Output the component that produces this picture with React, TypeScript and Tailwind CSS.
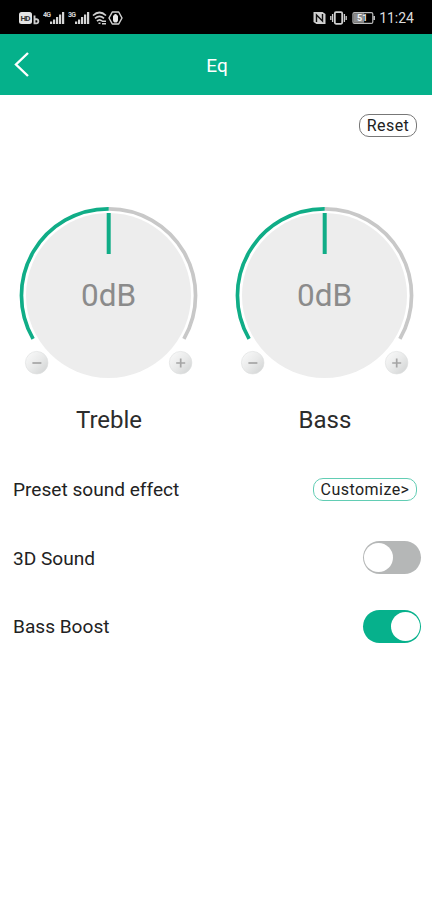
import { useState } from 'react';

interface DialProps {
  label: string;
  value: number;
  onChange: (value: number) => void;
}

function SignalIcon({ label }: { label: string }) {
  return (
    <svg width="22" height="16" viewBox="0 0 22 16" fill="#d4d4d4">
      <text x="0" y="6.5" fontSize="7" fontWeight="700" fontFamily="Roboto, sans-serif" textLength="8">
        {label}
      </text>
      <rect x="7" y="11.5" width="2.2" height="2.5" />
      <rect x="10" y="9.5" width="2.2" height="4.5" />
      <rect x="13" y="7" width="2.2" height="7" />
      <rect x="16" y="4.5" width="2.2" height="9.5" />
      <rect x="19" y="2" width="2.2" height="12" />
    </svg>
  );
}

function StatusBar() {
  return (
    <div className="flex h-[34px] items-center justify-between bg-black px-[18px] text-[#dcdcdc]">
      <div className="flex items-center pt-px">
        <svg width="22" height="16" viewBox="0 0 22 16">
          <rect x="1" y="2" width="13" height="12" rx="2.5" fill="#e4e4e4" />
          <text x="2.5" y="11" fontSize="8" fontWeight="700" fontFamily="Roboto, sans-serif" fill="#333" textLength="10">
            HD
          </text>
          <path d="M16.5 5.5v7.9h2a1.8 1.8 0 0 0 1.8-1.8v-.6a1.8 1.8 0 0 0-1.8-1.8h-2" fill="none" stroke="#ccc" strokeWidth="1.9" />
        </svg>
        <div className="ml-[3px]">
          <SignalIcon label="4G" />
        </div>
        <div className="ml-[3px]">
          <SignalIcon label="3G" />
        </div>
        <svg className="ml-[2px]" width="16" height="16" viewBox="0 0 16 16" fill="none" stroke="#d0d0d0" strokeWidth="1.7">
          <path d="M1 5.5Q7.5 -.5 14 5.5M3 8.3Q7.5 4.3 12 8.3M5 11.2Q7.5 8.6 10 11.2" />
          <path d="M6.5 13.2h2M10 11.3h4M10 13.8h4" strokeWidth="1.4" />
        </svg>
        <svg width="15" height="16" viewBox="0 0 15 16" fill="none" stroke="#cfcfcf" strokeWidth="1.5">
          <path d="M4.3 2h6.4L14 8l-3.3 6H4.3L1 8Z" strokeLinejoin="round" />
          <path d="M5 6.5q0-1.3 1-1.3 .3-1.2 1.5-1.2t1.5 1.2q1 0 1 1.3v3.2a2.5 2.8 0 0 1-5 0Z" fill="#e8e8e8" stroke="none" />
        </svg>
      </div>
      <div className="flex items-center pt-px">
        <svg className="mr-px" width="13" height="16" viewBox="0 0 13 16">
          <path d="M0.5 2h9l3 2v10h-9l-3-2Z" fill="#d0d0d0" />
          <path d="M3.5 12V5l6 6V4" fill="none" stroke="#111" strokeWidth="1.4" />
        </svg>
        <svg className="ml-[3px]" width="17" height="16" viewBox="0 0 17 16" fill="none" stroke="#d0d0d0" strokeWidth="1.8">
          <rect x="4.8" y="2.2" width="7.4" height="11.6" rx="1.2" />
          <path d="M2.6 4v8M14.4 4v8M.8 6v4M16.2 6v4" strokeWidth="1.3" />
        </svg>
        <svg className="ml-[5px]" width="24" height="16" viewBox="0 0 24 16">
          <rect x="1" y="2.6" width="19.8" height="10.8" rx="1.5" fill="none" stroke="#bdbdbd" strokeWidth="1.2" />
          <rect x="1.6" y="3.2" width="10.5" height="9.6" fill="#8c8c8c" />
          <rect x="21.3" y="6" width="1.7" height="4" fill="#bdbdbd" />
          <text x="5" y="11.2" fontSize="9" fontWeight="700" fontFamily="Roboto, sans-serif" fill="#f2f2f2">
            51
          </text>
        </svg>
        <span className="ml-[3px] text-[14px] leading-4">11:24</span>
      </div>
    </div>
  );
}

function Dial({ label, value, onChange }: DialProps) {
  const id = label.toLowerCase();

  return (
    <div className="flex w-1/2 flex-col items-center">
      <svg width="216" height="190" viewBox="0 0 216 190">
        <defs>
          <linearGradient id={`knob-${id}`} x1="0" y1="0" x2="1" y2="1">
            <stop offset="0" stopColor="#fbfbfb" />
            <stop offset="0.5" stopColor="#e9eaea" />
            <stop offset="1" stopColor="#cfd1d1" />
          </linearGradient>
        </defs>
        <circle cx="108.5" cy="100.5" r="82.5" fill="#ededed" />
        <path d="M108.5 13.8A86.7 86.7 0 0 1 183.9 143.9" fill="none" stroke="#c8c8c8" strokeWidth="3.7" />
        <path d="M33.1 143.9A86.7 86.7 0 0 1 108.7 13.8" fill="none" stroke="#10ad87" strokeWidth="3.7" />
        <rect x="106.7" y="18" width="4" height="41" fill="#10ad87" transform={`rotate(${value * 10} 108.5 100.5)`} />
        <text x="108.5" y="111.3" textAnchor="middle" fontSize="31.5" fill="#8b8b8b">
          {value}dB
        </text>
        <g className="cursor-pointer" onClick={() => onChange(Math.max(value - 1, -12))}>
          <circle cx="36.7" cy="167.7" r="11.3" fill={`url(#knob-${id})`} stroke="#dedfdf" strokeWidth="0.6" />
          <path d="M32.4 168h9" stroke="#a5a5a5" strokeWidth="1.7" />
        </g>
        <g className="cursor-pointer" onClick={() => onChange(Math.min(value + 1, 12))}>
          <circle cx="180.6" cy="167.7" r="11.3" fill={`url(#knob-${id})`} stroke="#dedfdf" strokeWidth="0.6" />
          <path d="M176.2 168h9M180.7 163.5v9" stroke="#a5a5a5" strokeWidth="1.7" />
        </g>
      </svg>
      <span className="mt-5 pl-[2px] text-[24px] leading-[30px] text-[#2c2c2c]">{label}</span>
    </div>
  );
}

function Toggle({ on, onClick }: { on: boolean; onClick: () => void }) {
  return (
    <button
      role="switch"
      aria-checked={on}
      className={`flex h-[33px] w-[58px] items-center rounded-full ${
        on ? 'justify-end bg-[#06b18c] pr-px' : 'justify-start bg-[#b5b7b7] pl-px'
      }`}
      onClick={onClick}
    >
      <span className="size-[29px] rounded-full bg-white" />
    </button>
  );
}

export default function App() {
  const [treble, setTreble] = useState(0);
  const [bass, setBass] = useState(0);
  const [sound3d, setSound3d] = useState(false);
  const [bassBoost, setBassBoost] = useState(true);

  const reset = () => {
    setTreble(0);
    setBass(0);
  };

  return (
    <div className="h-[900px] w-[432px] overflow-hidden bg-white font-[Roboto,sans-serif] text-[#222]">
      <StatusBar />
      <header className="grid h-[60.5px] grid-cols-3 items-center bg-[#05b18b] text-white">
        <button aria-label="Back" className="pl-[14px]">
          <svg width="16" height="26" viewBox="0 0 16 26" fill="none" stroke="white" strokeWidth="2.4">
            <path d="M14 2L2 13.5L14 25" />
          </svg>
        </button>
        <h1 className="pt-1 pl-[2px] text-center text-[19px]">Eq</h1>
      </header>

      <div className="flex justify-end pt-[19.5px] pr-[15px]">
        <button
          className="h-[23px] w-[58px] rounded-[10px] border border-[#777] text-[16px] leading-[21px] tracking-[0.4px]"
          onClick={reset}
        >
          Reset
        </button>
      </div>

      <div className="flex pt-[58px]">
        <Dial label="Treble" value={treble} onChange={setTreble} />
        <Dial label="Bass" value={bass} onChange={setBass} />
      </div>

      <div className="mt-5 pr-[11px] pl-[13px] text-[19.1px]">
        <div className="flex h-[68.5px] items-center justify-between">
          <span className="pt-[3px]">Preset sound effect</span>
          <button className="mr-1 h-[23px] w-[104px] rounded-[10px] border border-[#62cdb4] text-[16px] leading-[21px] tracking-[0.45px]">
            Customize&gt;
          </button>
        </div>
        <div className="flex h-[68.5px] items-center justify-between">
          <span className="pt-[3px]">3D Sound</span>
          <Toggle on={sound3d} onClick={() => setSound3d(!sound3d)} />
        </div>
        <div className="flex h-[68.5px] items-center justify-between">
          <span className="pt-0.5">Bass Boost</span>
          <Toggle on={bassBoost} onClick={() => setBassBoost(!bassBoost)} />
        </div>
      </div>
    </div>
  );
}
